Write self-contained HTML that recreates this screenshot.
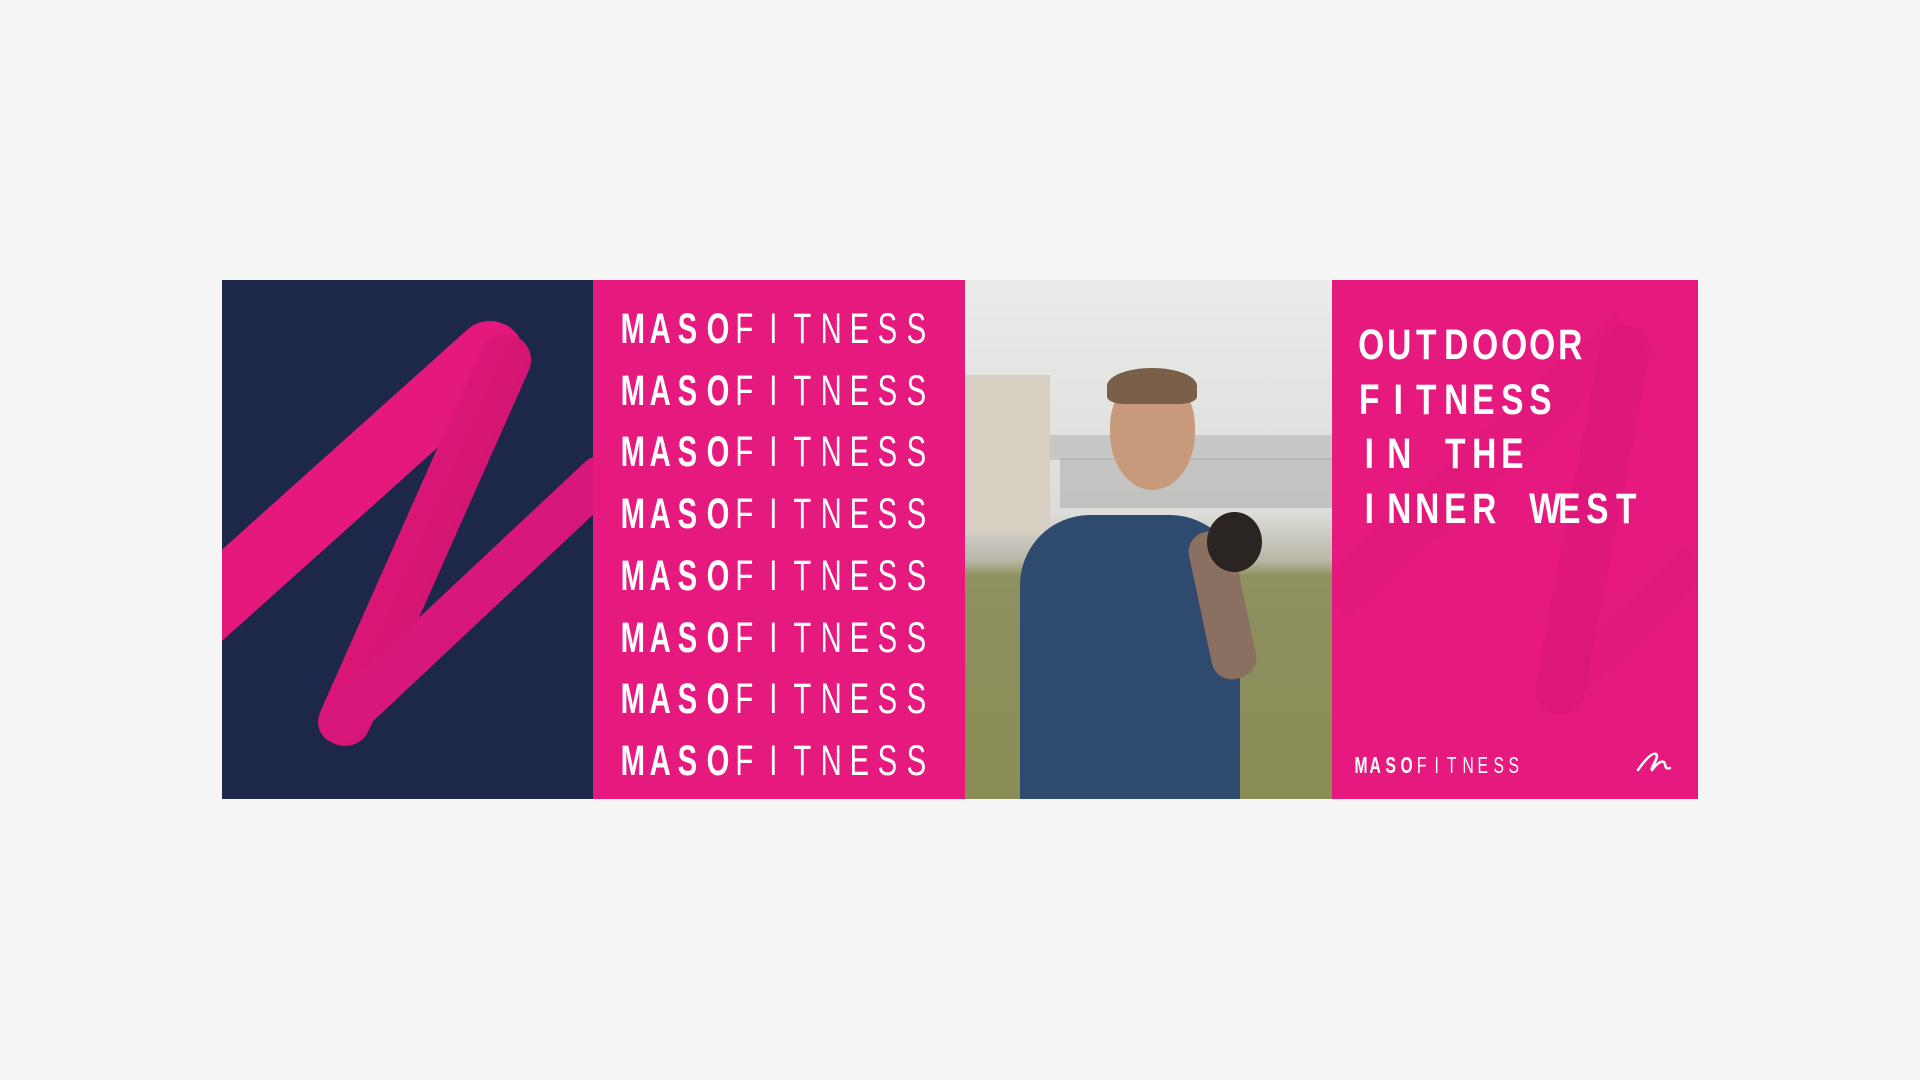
<!DOCTYPE html>
<html><head><meta charset="utf-8"><style>
*{margin:0;padding:0;box-sizing:border-box}
body{width:1920px;height:1080px;background:#f4f5f4;position:relative;overflow:hidden;font-family:"Liberation Sans",sans-serif}
.p{position:absolute;top:280px;height:519px;overflow:hidden}
.row{position:absolute;left:616px;height:44px;white-space:nowrap;color:#fff}
.c{display:inline-block;text-align:center;font-size:43px;line-height:44px;transform:scaleX(.68)}
.b{font-weight:bold}
</style></head><body>
<div class="p" style="left:222px;width:371px;background:#1c274a">
<svg width="371" height="519" viewBox="222 280 371 519">
<defs><linearGradient id="g" x1="0" y1="0" x2="1" y2="1"><stop offset="0" stop-color="#e8197e"/><stop offset=".7" stop-color="#d0156f"/><stop offset="1" stop-color="#b01060"/></linearGradient></defs>
<path d="M 200 615 L 490 355" stroke="#e5187c" stroke-width="68" stroke-linecap="round" fill="none"/>
<path d="M 505 360 L 345 720" stroke="url(#g)" stroke-width="52" stroke-linecap="round" fill="none"/>
<path d="M 340 722 L 600 478" stroke="#d8177a" stroke-width="44" stroke-linecap="round" fill="none"/>
</svg></div>
<div class="p" style="left:593px;width:372px;background:#e6197e"></div>
<div class="p" style="left:965px;width:367px;background:linear-gradient(#ebebe9 0,#dcdcda 45%,#b9b7a6 54%,#8e9160 57%,#8a8d55 100%)">
<div style="position:absolute;left:0;top:95px;width:85px;height:160px;background:#d8cfc3"></div>
<div style="position:absolute;left:85px;top:155px;width:282px;height:25px;background:#c7c8c6"></div>
<div style="position:absolute;left:95px;top:178px;width:272px;height:50px;background:#a8aaa6;opacity:.5"></div>
<div style="position:absolute;left:145px;top:95px;width:85px;height:115px;background:#c79a7c;border-radius:45% 45% 50% 50%"></div>
<div style="position:absolute;left:142px;top:88px;width:90px;height:36px;background:#7a6048;border-radius:50% 50% 20% 20%"></div>
<div style="position:absolute;left:55px;top:235px;width:220px;height:290px;background:#2e4a6f;border-radius:70px 70px 0 0"></div>
<div style="position:absolute;left:235px;top:250px;width:45px;height:150px;background:#8a7060;border-radius:20px;transform:rotate(-12deg)"></div>
<div style="position:absolute;left:242px;top:232px;width:55px;height:60px;background:#2a2422;border-radius:50%"></div>
</div>
<div class="p" style="left:1332px;width:366px;background:#e6197e">
<svg width="366" height="519" viewBox="1332 280 366 519" style="position:absolute;left:0;top:0">
<path d="M 1625 350 L 1560 690" stroke="#d81676" stroke-width="50" stroke-linecap="round" fill="none" opacity=".45"/>
<path d="M 1560 690 L 1698 560" stroke="#d81676" stroke-width="36" fill="none" opacity=".25"/>
<path d="M 1332 600 L 1630 330" stroke="#d81676" stroke-width="46" fill="none" opacity=".25"/>
<path d="M 1638 770 C 1645 760 1652 752 1656 754 C 1660 757 1650 768 1652 770 C 1655 766 1660 760 1664 762 C 1666 764 1664 770 1670 768" stroke="#fff" stroke-width="2.5" fill="none" stroke-linecap="round"/>
</svg>
</div>
<div id="rows"></div>
<script>
var h='';
for(var i=0;i<8;i++){var t=307+i*61.7;h+='<div class="row" style="top:'+t+'px">';
'MASOFITNESS'.split('').forEach(function(ch,j){h+='<span class="c'+(j<4?' b':'')+'" style="width:28.6px">'+ch+'</span>'});h+='</div>';}
var L=['OUTDOOOR','FITNESS','IN THE','INNER WEST'];
L.forEach(function(s,i){h+='<div class="row" style="left:1355px;top:'+(323+i*54.5)+'px">';s.split('').forEach(function(ch){h+='<span class="c b" style="width:28.5px;transform:scaleX(.78)">'+(ch==' '?'&nbsp;':ch)+'</span>'});h+='</div>';});
h+='<div class="row" style="left:1352px;top:753px;height:24px">';
'MASOFITNESS'.split('').forEach(function(ch,j){h+='<span class="c'+(j<4?' b':'')+'" style="width:15.4px;font-size:23px;line-height:24px">'+ch+'</span>'});h+='</div>';
document.getElementById('rows').innerHTML=h;
</script>
</body></html>
